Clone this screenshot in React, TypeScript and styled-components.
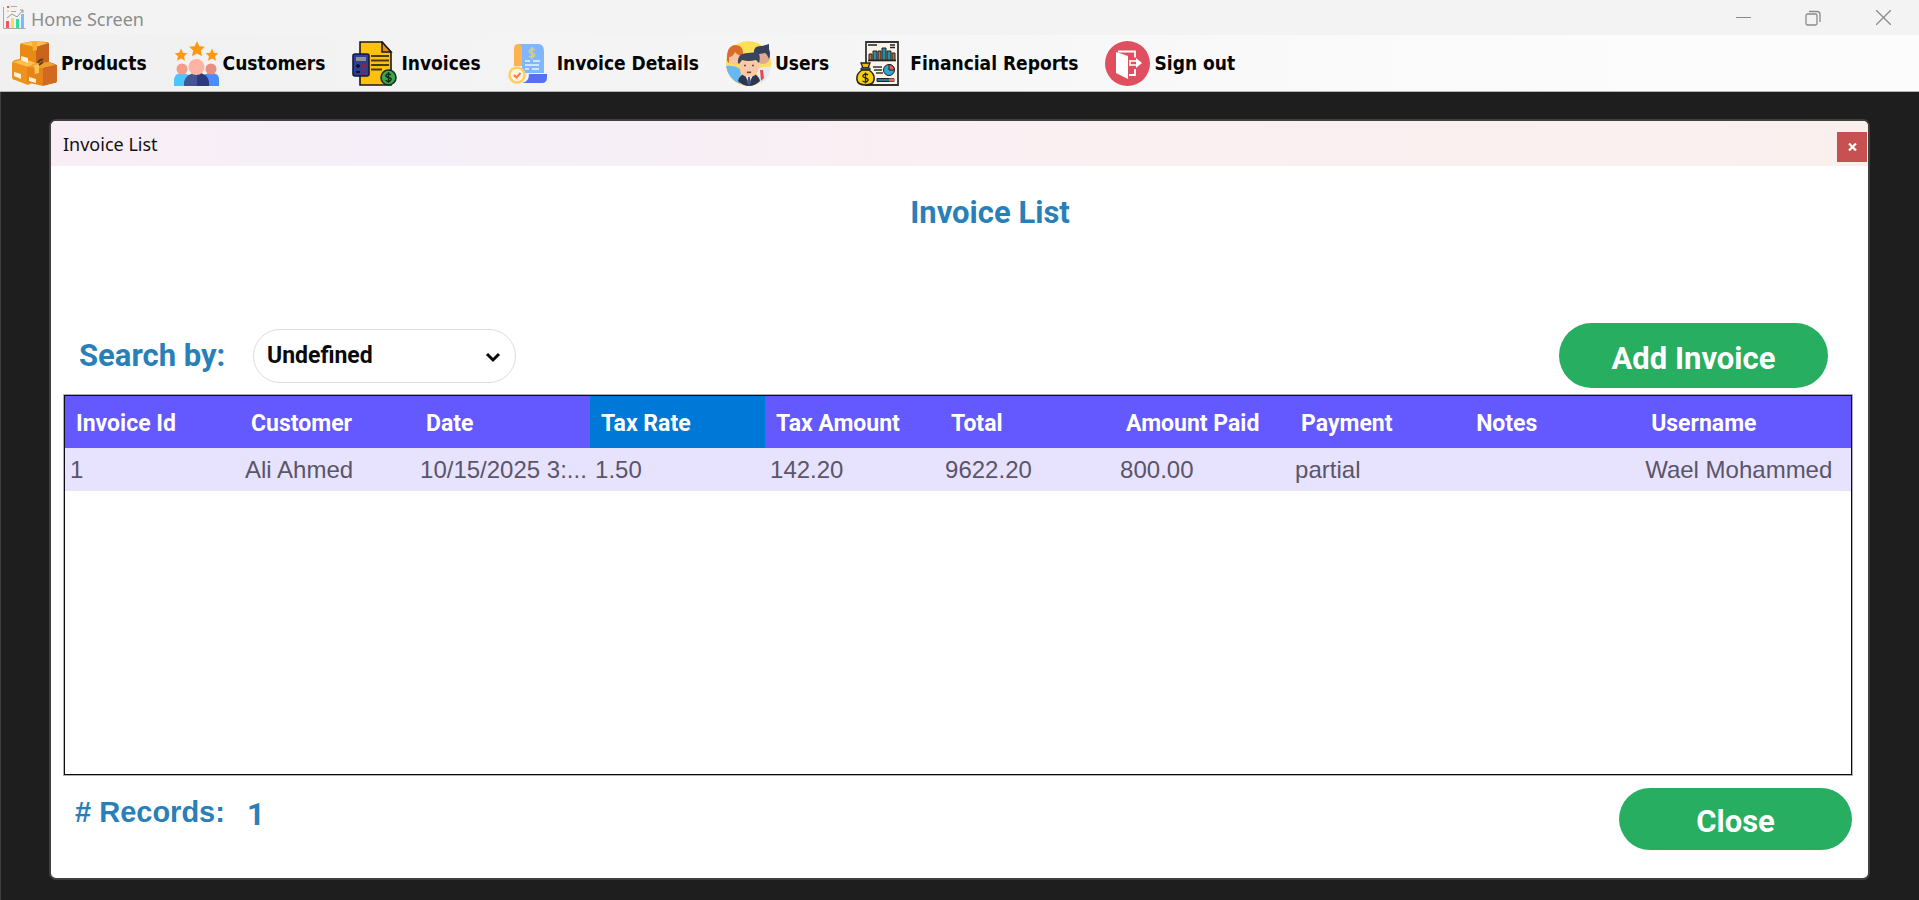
import React from "react";
import styled, { createGlobalStyle } from "styled-components";

const GlobalStyle = createGlobalStyle`
  *, *::before, *::after { box-sizing: border-box; }
  body { margin: 0; background: #1e1e1e; }
  button, select { font: inherit; }
`;

const titleFont = `"Roboto", "Open Sans", sans-serif`;
const systemFont = `"Noto Sans", "Open Sans", sans-serif`;
const blue = "#2980b9";
const green = "#27ae60";

const Screen = styled.div`
  min-height: 100vh;
  display: flex;
  flex-direction: column;
`;

const CaptionBar = styled.header`
  display: flex;
  align-items: center;
  height: 35px;
  padding: 0 1px 0 3px;
  background: #f3f3f3;
`;

const AppTitle = styled.h1`
  flex: 1;
  margin: 0 0 0 4px;
  padding-top: 2px;
  font: 400 18px/24px ${systemFont};
  color: #8c8c8c;
`;

const CaptionButton = styled.button`
  display: grid;
  place-items: center;
  width: 70px;
  height: 35px;
  padding: 0;
  border: 0;
  background: none;
  color: #8a8a8a;
`;

const MenuBar = styled.nav`
  display: flex;
  align-items: center;
  gap: 27px;
  height: 57px;
  padding: 0 12px;
  background: linear-gradient(90deg, #f0f0f0, #f5f5f5 40%, #fcfcfc 85%);
  border-bottom: 1px solid #b4b4b4;
`;

const MenuItem = styled.button`
  display: flex;
  align-items: center;
  gap: 4px;
  padding: 0;
  border: 0;
  background: none;
  font: 700 19px/24px "DejaVu Sans Condensed", "DejaVu Sans", sans-serif;
  color: #050505;
  white-space: nowrap;
  svg { flex: none; }
`;

const Desktop = styled.main`
  flex: 1;
  display: flex;
  padding: 27px 49px 20px 48px;
  background: #1e1e1e;
  border-left: 1px solid #3f3f3f;
`;

const Dialog = styled.section`
  flex: 1;
  min-width: 0;
  display: flex;
  flex-direction: column;
  border: 2px solid #404040;
  border-radius: 7px;
  background: #fff;
  overflow: hidden;
`;

const DialogHeader = styled.div`
  display: flex;
  justify-content: space-between;
  align-items: flex-start;
  height: 45px;
  padding: 11px 1px 0 12px;
  background: linear-gradient(90deg, #f9eef5, #f5eff9 20%, #faeff2 50%, #f9f0ee);
`;

const DialogTitle = styled.h2`
  margin: 0;
  font: 400 18px/24px ${systemFont};
  color: #111;
`;

const DialogClose = styled.button`
  display: grid;
  place-items: center;
  width: 30px;
  height: 30px;
  padding: 0;
  border: 0;
  background: #c75050;
  color: #fff;
`;

const DialogBody = styled.div`
  flex: 1;
  display: flex;
  flex-direction: column;
  padding: 25px 16px 28px 13px;
`;

const PageTitle = styled.h3`
  margin: 0 0 88px;
  padding-left: 64px;
  text-align: center;
  font: 700 31px/44px ${titleFont};
  color: ${blue};
`;

const Toolbar = styled.div`
  display: flex;
  align-items: center;
  margin-bottom: 7px;
  padding: 0 24px 0 15px;
`;

const SearchLabel = styled.label`
  width: 174px;
  font: 700 31px/44px ${titleFont};
  color: ${blue};
`;

const SelectBox = styled.div`
  position: relative;
  width: 263px;
  svg {
    position: absolute;
    right: 15px;
    top: 22px;
    pointer-events: none;
  }
`;

const Select = styled.select`
  appearance: none;
  width: 100%;
  height: 54px;
  padding: 0 40px 0 13px;
  border: 1px solid #d9dde2;
  border-radius: 27px;
  background: #fff;
  font: 700 23px/32px ${titleFont};
  color: #0a0a0a;
`;

const PillButton = styled.button<{ $wide?: boolean }>`
  margin-left: auto;
  width: ${(p) => (p.$wide ? 269 : 233)}px;
  height: ${(p) => (p.$wide ? 65 : 62)}px;
  padding: 6px 0 0;
  border: 0;
  border-radius: 33px;
  background: ${green};
  font: 700 31px/44px ${titleFont};
  color: #fff;
`;

const Grid = styled.div`
  flex: 1;
  border: 1px solid #0c0c14;
  outline: 1px solid #b0b0b0;
`;

const Table = styled.table`
  width: 100%;
  table-layout: fixed;
  border-collapse: collapse;
`;

const Column = styled.col`
  width: 9.8%;
`;

const HeadCell = styled.th<{ $active?: boolean }>`
  height: 52px;
  padding: 3px 0 0 11px;
  text-align: left;
  white-space: nowrap;
  font: 700 23px/32px ${titleFont};
  color: #fff;
  background: ${(p) => (p.$active ? "#0078d7" : "#6458ff")};
`;

const Cell = styled.td`
  height: 43px;
  padding: 0 0 0 5px;
  white-space: nowrap;
  overflow: hidden;
  font: 400 24px/32px "Liberation Sans", Arial, sans-serif;
  color: #5a5568;
  background: #e7e3ff;
`;

const Footer = styled.div`
  display: flex;
  align-items: flex-start;
  margin-top: 13px;
`;

const RecordsLabel = styled.span`
  width: 183px;
  padding: 4px 0 0 11px;
  font: 700 29px/40px "Liberation Sans", Arial, sans-serif;
  color: ${blue};
`;

const RecordsCount = styled.output`
  padding-top: 5px;
  font: 700 31px/44px ${titleFont};
  color: ${blue};
`;

const AppIcon = () => (
  <svg width="24" height="24" viewBox="0 0 24 24" aria-hidden="true">
    <path d="M.5 1v21.500h22" fill="none" stroke="#aaa" />
    <path d="M3 15h3v7H3z" fill="#ff5266" />
    <path d="M8 12h3v10H8z" fill="#ffd75e" />
    <path d="M13 13h3v9h-3z" fill="#2de0a0" />
    <path d="M18 8h3v14h-3z" fill="#79bdff" />
    <path d="M4 12l5-4 5 3 6-7M17 4h3v3" fill="none" stroke="#9a9a9a" />
    <path d="M8 .500h6M8 5.500h5" stroke="#aaa" />
    <path d="M4 0h2v2H4z" fill="#ff5266" />
    <path d="M4 4h2v2H4z" fill="#ffd75e" />
  </svg>
);

const ProductsIcon = () => (
  <svg width="45" height="45" viewBox="0 0 45 45" aria-hidden="true">
    <path d="M8 4q0-2 3-2l10-2 14 1q2 0 2 3v18l-15 4-12-4q-2 0-2-3z" fill="#e98a15" />
    <path d="M9 3l12-3 15 2-12 4z" fill="#ffc04c" />
    <path d="M24 6l13-4v19l-13 4z" fill="#c9641d" />
    <path d="M20 1l5-1v9l-4 1z" fill="#f6ad35" />
    <path d="M0 22q0-2 3-3l9-2 12 5v18l-8 4-13-5q-3 0-3-3z" fill="#ee921b" />
    <path d="M1 21l11-3 12 4-8 4z" fill="#ffbf4e" />
    <path d="M23 25l14-4 6 2q2 1 2 3v13q0 3-3 3l-11 2-8-3z" fill="#c95f1e" />
    <path d="M15 26l9-3 7 3v19l-13-3q-3 0-3-3z" fill="#e58418" />
    <path d="M15 26l9-4 13-1 7 3-13 3z" fill="#f0a02f" />
    <path d="M31 27l14-3v15q0 3-3 3l-11 3z" fill="#cf6a20" />
    <path d="M22 24l5-1v9l-4 1z" fill="#ffc25a" />
    <path d="M9 15l7 2v5l-7-3zM2 31l7 2v5l-7-3zM17 36l7 2v4l-7-2z" fill="#fff0dc" />
    <path d="M26 22c1-3 4-4 5-3M27 24l4-3" stroke="#5e3d15" strokeWidth="2" fill="none" />
  </svg>
);

const star = "M0-8l2.400 5.200 5.600.6-4.200 3.800 1.200 5.600L0 4.400l-5 2.800 1.200-5.600L-8-2.200l5.600-.6z";

const CustomersIcon = () => (
  <svg width="45" height="45" viewBox="0 0 45 45" aria-hidden="true">
    <g fill="#ff9811">
      <path d={star} transform="translate(23 8)" />
      <path d={star} transform="translate(7 14) scale(.8)" />
      <path d={star} transform="translate(38 14) scale(.8)" />
    </g>
    <path d="M0 45V38q1-6 8-6t9 6v7z" fill="#4fc3ff" />
    <path d="M28 45v-7q1-6 9-6t8 6v7z" fill="#4a8cff" />
    <path d="M10 45V41q2-9 13-9t12 9v4z" fill="#46548f" />
    <path d="M23 32q10 0 12 9v4H23z" fill="#2b3a78" />
    <circle cx="8" cy="28" r="5.500" fill="#f59b8c" />
    <circle cx="37" cy="28" r="5.500" fill="#e98f82" />
    <circle cx="22.500" cy="26" r="8" fill="#ffb3a3" />
  </svg>
);

const InvoicesIcon = () => (
  <svg width="45" height="45" viewBox="0 0 45 45" aria-hidden="true">
    <path d="M8 1h22l9 10v33H8z" fill="#ffc10d" stroke="#1a1a1a" strokeWidth="1.600" />
    <path d="M30 1v10h9z" fill="#f08a1c" stroke="#1a1a1a" strokeWidth="1.500" />
    <path d="M19 15h18M19 19.500h18M19 24h18M19 28.500h11" stroke="#4a3a08" strokeWidth="2" />
    <rect x="1" y="13" width="16" height="22" rx="2" fill="#2f3f94" stroke="#14193f" strokeWidth="1.600" />
    <rect x="4" y="16" width="10" height="4" fill="#8f9092" />
    <path d="M4 25h4M6 23v4M4 31h4" stroke="#11142e" strokeWidth="2" />
    <path d="M10 23l4 4M14 23l-4 4M10 30h4M10 33h4" stroke="#a51e34" strokeWidth="1.500" />
    <circle cx="36.500" cy="36.500" r="7.500" fill="#3fa650" stroke="#12301a" strokeWidth="1.600" />
    <path d="M39 34q-2.500-2-4.500-.5t2 3q4 1 2 3t-5-.2M36.500 31v11" stroke="#0e2d15" strokeWidth="1.400" fill="none" />
  </svg>
);

const DetailsIcon = () => (
  <svg width="45" height="45" viewBox="0 0 45 45" aria-hidden="true">
    <path d="M10 3h21q5 1 5 7v22H14V8z" fill="#80b6fb" />
    <path d="M6 8q0-5 4-5t4 5v17H6z" fill="#ffb24f" />
    <path d="M21 33h18v3q0 6-5 6H14q7-1 7-9z" fill="#5470f6" />
    <path d="M27 9q-3-2-5 0t1 3q5 1 3 3t-5 0M24 6v12" stroke="#d5cf86" strokeWidth="1.600" fill="none" />
    <path d="M17 20h5M25 20h7M17 24h14M17 28h4M24 28h7" stroke="#eaf3ff" strokeWidth="1.500" />
    <circle cx="9" cy="34" r="7.500" fill="#fff3e4" stroke="#ffce63" strokeWidth="2.500" />
    <path d="M6 34l2.500 2.500L12.500 32" stroke="#ff7c3a" strokeWidth="2" fill="none" />
  </svg>
);

const UsersIcon = () => (
  <svg width="45" height="45" viewBox="0 0 45 45" aria-hidden="true">
    <circle cx="22.500" cy="22.500" r="22.500" fill="#ffdf55" />
    <path d="M0 25q8-1 15 3l-1 15Q2 38 0 25z" fill="#67baf0" />
    <path d="M30 28q8-3 15-2-1 12-11 17z" fill="#e5eaf4" />
    <path d="M34 29h3l1 8-3 3z" fill="#e84a55" />
    <circle cx="9" cy="16" r="7.500" fill="#f6c4a0" />
    <path d="M1 20Q0 5 9 4q9 0 8 11-5 0-8-4-2 5-6 5v6z" fill="#d96b2c" />
    <circle cx="37" cy="16" r="7" fill="#e0a98b" />
    <path d="M28 13q-1-9 8-8l7-2v5q2 5 0 10-2-5-4-6-6 1-11 1z" fill="#34405e" />
    <path d="M12 40q2-8 11-8t11 8q-5 5-11 5t-11-5z" fill="#2b3554" />
    <path d="M19 33h8l-4 11z" fill="#fff" />
    <path d="M22 36h2l1 6-2 3-2-3z" fill="#47577c" />
    <path d="M13 20h20v6q-2 10-10 10t-10-10z" fill="#f9c9a8" />
    <path d="M12 22q-1-10 10-10l10-1q3 5 1 11l-3-3q-8 2-14 0l-3 4z" fill="#39445f" />
    <path d="M18 24.500h2M26 24.500h2M21 31q2 1 4 0" stroke="#6a4b42" strokeWidth="1.500" fill="none" />
  </svg>
);

const ReportsIcon = () => (
  <svg width="50" height="45" viewBox="0 0 50 45" aria-hidden="true">
    <path d="M10 1h32v43H10z" fill="#faf4e8" stroke="#333" strokeWidth="1.800" />
    <path d="M12 4h9M34 4h5M34 6.500h5" stroke="#222" strokeWidth="1.400" />
    <path d="M12 19.500h28" stroke="#222" strokeWidth="1.600" />
    <path d="M13 13h3v6h-3zM22 10h3v9h-3zM36 12h3v7h-3z" fill="#b86d3d" stroke="#222" />
    <path d="M17 10h4v9h-4zM26 7h4v12h-4zM31 10h4v9h-4z" fill="#2a8fa0" stroke="#222" />
    <path d="M17 26h9M18 29h8M20 32h7" stroke="#333" strokeWidth="1.400" />
    <circle cx="33" cy="29" r="5.500" fill="#2aa9cc" stroke="#222" />
    <path d="M33 29v-5.500a5.500 5.500 0 0 1 5.500 5.500z" fill="#ee5b4b" stroke="#222" />
    <path d="M21 37.500h17v3H21z" fill="#237f9f" stroke="#222" />
    <path d="M33 37.500h5v3h-5z" fill="#e76b50" />
    <path d="M5 22h9l-2 5H7z" fill="#f4b81c" stroke="#222" strokeWidth="1.300" />
    <path d="M5 27h9v2H5z" fill="#2e9c86" stroke="#222" />
    <path d="M6 29h7q6 4 5 10-1 5-8.500 5T1 39q-1-6 5-10z" fill="#f8d20f" stroke="#222" strokeWidth="1.500" />
    <path d="M12 34q-2.500-2-4.500 0t2 3q4 1 2 3t-5 0M9.500 31.500v11" stroke="#222" strokeWidth="1.300" fill="none" />
  </svg>
);

const SignOutIcon = () => (
  <svg width="45" height="45" viewBox="0 0 45 45" aria-hidden="true">
    <circle cx="22.500" cy="22.500" r="22.500" fill="#e04f5f" />
    <path d="M11 11l12 4v23l-12-6z" fill="#fff" />
    <path d="M13 10.500h17v6M30 28v6h-6" fill="none" stroke="#fff" strokeWidth="1.800" />
    <path d="M25 20h6M25 24h6M25 19v6" fill="none" stroke="#fff" strokeWidth="1.500" />
    <path d="M31 17v10l6-5z" fill="#fff" />
  </svg>
);

const menu = [
  { label: "Products", icon: <ProductsIcon /> },
  { label: "Customers", icon: <CustomersIcon /> },
  { label: "Invoices", icon: <InvoicesIcon /> },
  { label: "Invoice Details", icon: <DetailsIcon /> },
  { label: "Users", icon: <UsersIcon /> },
  { label: "Financial Reports", icon: <ReportsIcon /> },
  { label: "Sign out", icon: <SignOutIcon /> },
];

const columns = [
  "Invoice Id", "Customer", "Date", "Tax Rate", "Tax Amount",
  "Total", "Amount Paid", "Payment", "Notes", "Username",
];

const rows = [
  ["1", "Ali Ahmed", "10/15/2025 3:...", "1.50", "142.20", "9622.20", "800.00", "partial", "", "Wael Mohammed"],
];

export default function App() {
  return (
    <Screen>
      <GlobalStyle />
      <CaptionBar>
        <AppIcon />
        <AppTitle>Home Screen</AppTitle>
        <CaptionButton aria-label="Minimize">
          <svg width="15" height="15" viewBox="0 0 15 15"><path d="M0 7.500h15" stroke="currentColor" /></svg>
        </CaptionButton>
        <CaptionButton aria-label="Restore">
          <svg width="16" height="16" viewBox="0 0 16 16" fill="none" stroke="currentColor" strokeWidth="1.300">
            <rect x="1" y="4" width="11" height="11" rx="1.500" />
            <path d="M4 1.500h8q3 0 3 3V12" />
          </svg>
        </CaptionButton>
        <CaptionButton aria-label="Close application">
          <svg width="15" height="15" viewBox="0 0 15 15"><path d="M0 0l15 15M15 0L0 15" stroke="currentColor" strokeWidth="1.300" /></svg>
        </CaptionButton>
      </CaptionBar>

      <MenuBar>
        {menu.map((item) => (
          <MenuItem key={item.label}>
            {item.icon}
            {item.label}
          </MenuItem>
        ))}
      </MenuBar>

      <Desktop>
        <Dialog>
          <DialogHeader>
            <DialogTitle>Invoice List</DialogTitle>
            <DialogClose aria-label="Close dialog">
              <svg width="9" height="8" viewBox="0 0 9 8"><path d="M1 .5l7 7M8 .5l-7 7" stroke="currentColor" strokeWidth="2.200" /></svg>
            </DialogClose>
          </DialogHeader>
          <DialogBody>
            <PageTitle>Invoice List</PageTitle>
            <Toolbar>
              <SearchLabel htmlFor="searchBy">Search by:</SearchLabel>
              <SelectBox>
                <Select id="searchBy" defaultValue="Undefined">
                  <option>Undefined</option>
                </Select>
                <svg width="16" height="12" viewBox="0 0 16 12" aria-hidden="true">
                  <path d="M2 3l6 6 6-6" fill="none" stroke="#0a0a0a" strokeWidth="3" />
                </svg>
              </SelectBox>
              <PillButton $wide>Add Invoice</PillButton>
            </Toolbar>
            <Grid>
              <Table>
                <colgroup>
                  {columns.slice(0, -1).map((name) => <Column key={name} />)}
                  <col />
                </colgroup>
                <thead>
                  <tr>
                    {columns.map((name) => (
                      <HeadCell key={name} scope="col" $active={name === "Tax Rate"}>{name}</HeadCell>
                    ))}
                  </tr>
                </thead>
                <tbody>
                  {rows.map((row) => (
                    <tr key={row[0]}>
                      {row.map((value, i) => <Cell key={columns[i]}>{value}</Cell>)}
                    </tr>
                  ))}
                </tbody>
              </Table>
            </Grid>
            <Footer>
              <RecordsLabel>{"# Records:"}</RecordsLabel>
              <RecordsCount>1</RecordsCount>
              <PillButton>Close</PillButton>
            </Footer>
          </DialogBody>
        </Dialog>
      </Desktop>
    </Screen>
  );
}
